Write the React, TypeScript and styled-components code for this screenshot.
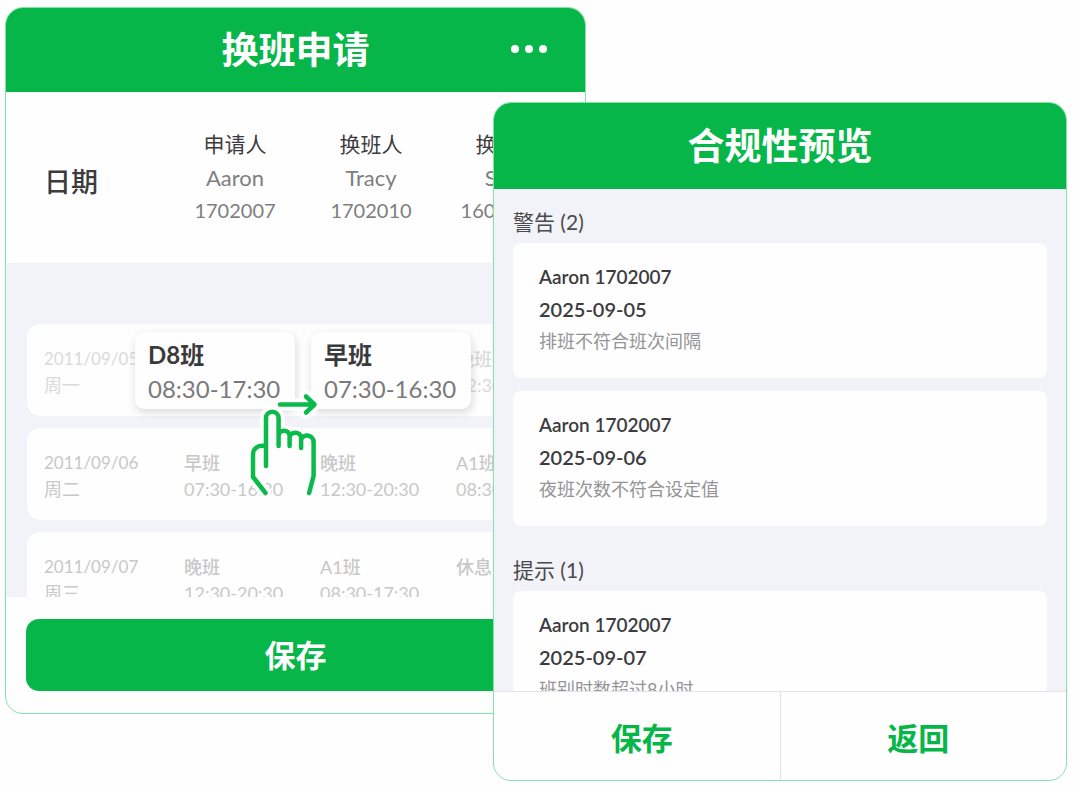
import React from "react";
import styled, { createGlobalStyle } from "styled-components";

const green = "#06b649";
const outline = "#84e3a6";
const canvas = "#f2f3f8";

const GlobalStyle = createGlobalStyle`
  *, *::before, *::after { box-sizing: border-box; }
  body {
    margin: 0;
    background: #fefefe;
    color: #3c3c3e;
    font-family: Lato, "Noto Sans CJK SC", sans-serif;
  }
  button { font-family: inherit; border: 0; cursor: pointer; padding: 0; }
  h1, h2, p { margin: 0; }
`;

const Stage = styled.main`
  display: flex;
  align-items: flex-start;
  padding: 7px 13px 11px 5px;
`;

const Panel = styled.section<{ $grow: number; $front?: boolean }>`
  flex: ${(p) => p.$grow} 1 0;
  min-width: 0;
  overflow: hidden;
  border: 1px solid ${outline};
  border-radius: 18px;
  background: #fefefe;
  ${(p) => p.$front && "position: relative; margin: 95px 0 0 -93px;"}
`;

const PanelHeader = styled.header<{ $tall?: boolean }>`
  display: grid;
  grid-template-columns: 1fr auto 1fr;
  align-items: center;
  height: ${(p) => (p.$tall ? 86 : 84)}px;
  padding: 0 36px;
  background: ${green};
  color: #fff;
`;

const Title = styled.h1`
  grid-column: 2;
  font-size: 37px;
  line-height: 48px;
  font-weight: 700;
`;

const MoreButton = styled.button`
  justify-self: end;
  display: flex;
  background: transparent;
  color: #fff;
`;

const Schedule = styled.div`
  position: relative;
`;

const Table = styled.table`
  display: block;
  overflow: hidden;
`;

const columns = "123px repeat(3, 136px)";

const TableHead = styled.thead`
  display: block;
  padding: 34px 0 37px 38px;
`;

const HeadRow = styled.tr`
  display: grid;
  grid-template-columns: ${columns};
  align-items: center;
`;

const DateHeading = styled.th`
  padding: 12px 0 0;
  text-align: left;
  font-size: 27px;
  line-height: 36px;
  font-weight: 500;
`;

const PersonHeading = styled.th`
  padding: 0;
  text-align: center;
  font-weight: 400;
  color: #7e7e80;
  font-size: 20px;
  line-height: 32px;
`;

const Role = styled.div`
  color: #3c3c3e;
  font-size: 21px;
  line-height: 36px;
`;

const PersonName = styled.div`
  font-size: 22px;
`;

const TableBody = styled.tbody`
  display: flex;
  flex-direction: column;
  gap: 12px;
  max-height: 334px;
  overflow: hidden;
  padding: 61px 0 0 21px;
  background: ${canvas};
`;

const DayRow = styled.tr<{ $faint?: boolean }>`
  display: grid;
  grid-template-columns: ${columns};
  flex-shrink: 0;
  padding: 22px 0 18px 17px;
  border-radius: 14px;
  background: #fefefe;
  font-size: 18px;
  line-height: 26px;
  color: ${(p) => (p.$faint ? "#dadada" : "#c8c8c8")};
`;

const DateCell = styled.th`
  padding: 0;
  text-align: left;
  font-weight: 400;
`;

const DateText = styled.div`
  font-size: 17px;
`;

const ShiftCell = styled.td`
  padding: 0 0 0 17px;
  white-space: nowrap;
`;

const ShiftName = styled.div`
  font-weight: 500;
`;

const DragLayer = styled.div`
  position: absolute;
  top: 240px;
  left: 129px;
  display: flex;
  gap: 16px;
`;

const DragCard = styled.div`
  width: 160px;
  padding: 6px 0 3px 13px;
  border-radius: 9px;
  background: #fefefe;
  box-shadow: 1px 3px 9px rgba(60, 60, 80, 0.2);
  font-size: 24px;
  line-height: 34px;
  white-space: nowrap;
  color: #7a7a7c;
`;

const DragName = styled.div`
  font-weight: 700;
  color: #3a3a3c;
`;

const Hand = styled.svg`
  position: absolute;
  left: 110px;
  top: 59px;
`;

const SaveBar = styled.div`
  padding: 22px 20px 22px;
`;

const SaveButton = styled.button`
  width: 100%;
  height: 72px;
  padding-bottom: 4px;
  border-radius: 13px;
  background: ${green};
  color: #fff;
  font-size: 31px;
  font-weight: 700;
`;

const Review = styled.div`
  max-height: 502px;
  overflow: hidden;
  padding: 16px 19px 0;
  background: ${canvas};
`;

const Group = styled.section`
  display: flex;
  flex-direction: column;
  gap: 13px;
  margin-bottom: 27px;
`;

const GroupTitle = styled.h2`
  margin-bottom: -9px;
  font-size: 21px;
  line-height: 34px;
  font-weight: 400;
  color: #4a4a4c;
`;

const Notice = styled.article`
  padding: 18px 26px 21px;
  border-radius: 8px;
  background: #fefefe;
  font-size: 20px;
  line-height: 32px;
  font-weight: 600;
  color: #3c3c3e;
`;

const Who = styled.p`
  font-size: 19px;
`;

const Reason = styled.p`
  font-size: 18px;
  font-weight: 400;
  color: #949496;
`;

const Actions = styled.footer`
  display: flex;
  border-top: 1px solid #e4e4e8;
`;

const ActionButton = styled.button`
  flex: 1;
  height: 88px;
  padding-left: 10px;
  background: transparent;
  color: ${green};
  font-size: 31px;
  font-weight: 700;
  & + & {
    padding: 0 10px 0 0;
    border-left: 1px solid #e4e4e8;
  }
`;

const people = [
  { role: "申请人", name: "Aaron", id: "1702007" },
  { role: "换班人", name: "Tracy", id: "1702010" },
  { role: "换班人", name: "Sally", id: "16020008" },
];

const days = [
  { date: "2011/09/05", day: "周一", faint: true, shifts: [["", ""], ["", ""], ["晚班", "12:30-20:30"]] },
  { date: "2011/09/06", day: "周二", shifts: [["早班", "07:30-16:30"], ["晚班", "12:30-20:30"], ["A1班", "08:30-17:30"]] },
  { date: "2011/09/07", day: "周三", shifts: [["晚班", "12:30-20:30"], ["A1班", "08:30-17:30"], ["休息", ""]] },
];

const groups = [
  {
    title: "警告 (2)",
    items: [
      { who: "Aaron 1702007", date: "2025-09-05", reason: "排班不符合班次间隔" },
      { who: "Aaron 1702007", date: "2025-09-06", reason: "夜班次数不符合设定值" },
    ],
  },
  {
    title: "提示 (1)",
    items: [{ who: "Aaron 1702007", date: "2025-09-07", reason: "班别时数超过8小时" }],
  },
];

const handPath =
  "M267 466V418a6.300 6.300 0 0 1 12.600 0V446" +
  "M279.600 436c0-7 11-7 11 0v10" +
  "M290.600 438c0-7 11.500-7 11.500 0v10" +
  "M302.100 448v-7c0-8 12.500-7 12.500 1v34l-4.500 17" +
  "M266 446c-7-1-12 2-12 9v22l12.500 16";
const arrowPath = "M281 404.500H315M307 396.500l8.500 8-8.500 8";

function SwapGesture() {
  return (
    <Hand width="76" height="112" viewBox="246 391 76 112" fill="none" strokeLinecap="round" strokeLinejoin="round" aria-hidden="true">
      <path d={handPath + arrowPath} stroke="#fefefe" strokeWidth="12" />
      <path d={handPath} stroke="#0aba4b" strokeWidth="4.500" />
      <path d={arrowPath} stroke="#0aba4b" strokeWidth="4.500" />
    </Hand>
  );
}

export default function App() {
  return (
    <>
      <GlobalStyle />
      <Stage>
        <Panel $grow={581}>
          <PanelHeader>
            <Title>换班申请</Title>
            <MoreButton type="button" aria-label="更多">
              <svg width="38" height="10" viewBox="0 0 38 10" fill="currentColor">
                <circle cx="4" cy="4" r="4" />
                <circle cx="18" cy="4" r="4" />
                <circle cx="32" cy="4" r="4" />
              </svg>
            </MoreButton>
          </PanelHeader>
          <Schedule>
            <Table>
              <TableHead>
                <HeadRow>
                  <DateHeading scope="col">日期</DateHeading>
                  {people.map((p) => (
                    <PersonHeading scope="col" key={p.id}>
                      <Role>{p.role}</Role>
                      <PersonName>{p.name}</PersonName>
                      <div>{p.id}</div>
                    </PersonHeading>
                  ))}
                </HeadRow>
              </TableHead>
              <TableBody>
                {days.map((d) => (
                  <DayRow key={d.date} $faint={d.faint}>
                    <DateCell scope="row">
                      <DateText>{d.date}</DateText>
                      <div>{d.day}</div>
                    </DateCell>
                    {d.shifts.map(([name, time], i) => (
                      <ShiftCell key={i}>
                        <ShiftName>{name}</ShiftName>
                        <div>{time}</div>
                      </ShiftCell>
                    ))}
                  </DayRow>
                ))}
              </TableBody>
            </Table>
            <DragLayer>
              <DragCard>
                <DragName>D8班</DragName>
                <div>08:30-17:30</div>
              </DragCard>
              <DragCard>
                <DragName>早班</DragName>
                <div>07:30-16:30</div>
              </DragCard>
              <SwapGesture />
            </DragLayer>
          </Schedule>
          <SaveBar>
            <SaveButton type="button">保存</SaveButton>
          </SaveBar>
        </Panel>
        <Panel $grow={574} $front>
          <PanelHeader $tall>
            <Title>合规性预览</Title>
          </PanelHeader>
          <Review>
            {groups.map((g) => (
              <Group key={g.title}>
                <GroupTitle>{g.title}</GroupTitle>
                {g.items.map((n) => (
                  <Notice key={n.date}>
                    <Who>{n.who}</Who>
                    <p>{n.date}</p>
                    <Reason>{n.reason}</Reason>
                  </Notice>
                ))}
              </Group>
            ))}
          </Review>
          <Actions>
            <ActionButton type="button">保存</ActionButton>
            <ActionButton type="button">返回</ActionButton>
          </Actions>
        </Panel>
      </Stage>
    </>
  );
}
